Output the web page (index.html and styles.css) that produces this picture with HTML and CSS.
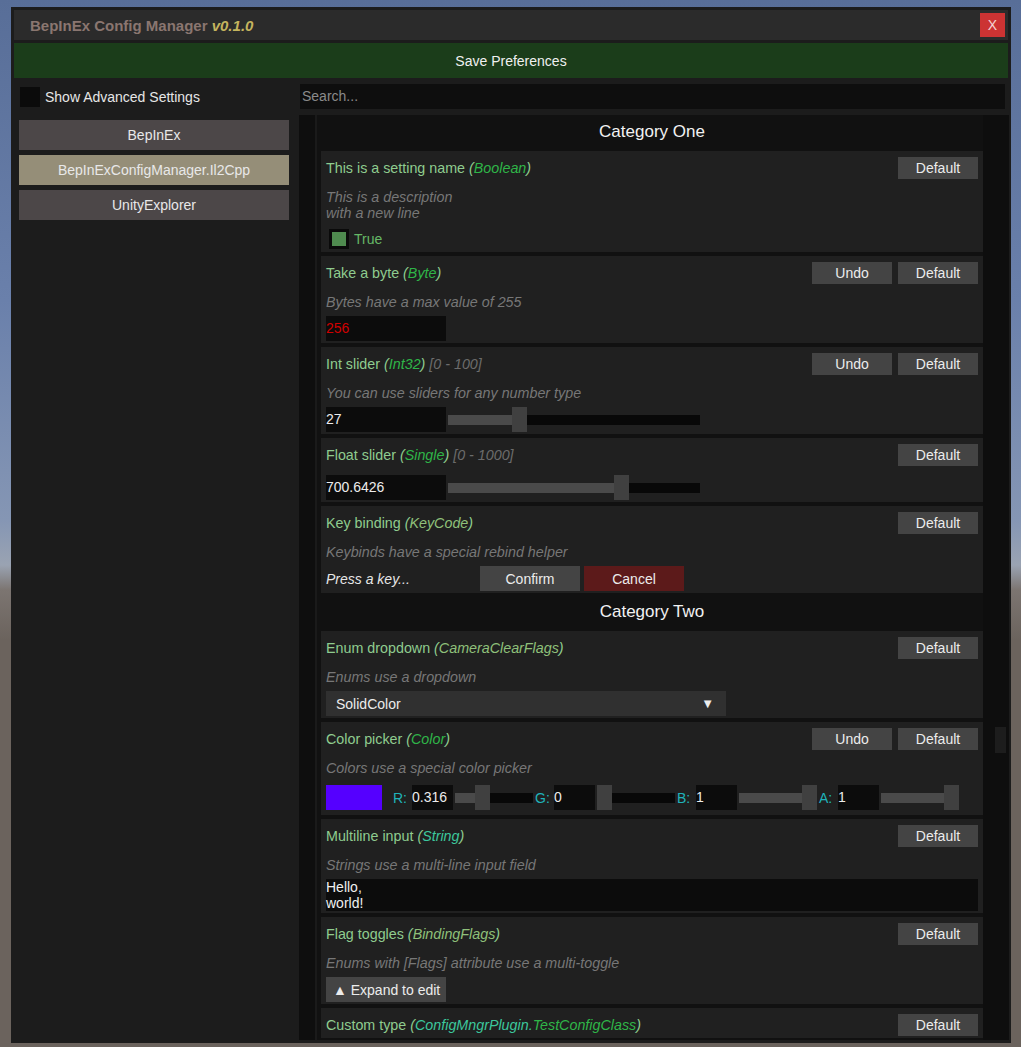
FILE: index.html
```html
<!DOCTYPE html>
<html lang="en">
<head>
    <meta charset="UTF-8">
    <title>BepInEx Config Manager</title>
    <link rel="stylesheet" href="styles.css">
</head>
<body>
    <div class="window">
        <!-- Title bar -->
        <div class="titlebar">
            <div class="title">BepInEx Config Manager <i>v0.1.0</i></div>
            <button class="close-btn">X</button>
        </div>
        <div class="save-bar">Save Preferences</div>

        <div class="main">
            <!-- Plugin list -->
            <div class="sidebar">
                <div class="adv-toggle">
                    <span class="checkbox"></span>
                    <span>Show Advanced Settings</span>
                </div>
                <div class="plugin-list">
                    <div class="plugin-btn">BepInEx</div>
                    <div class="plugin-btn active">BepInExConfigManager.Il2Cpp</div>
                    <div class="plugin-btn">UnityExplorer</div>
                </div>
            </div>

            <!-- Settings -->
            <div class="content">
                <div class="search">Search...</div>
                <div class="scroll">
                    <div class="scroll-gutter"></div>
                    <div class="settings">
                        <div class="category">Category One</div>

                        <div class="setting">
                            <div class="setting-head">
                                <div class="setting-name">This is a setting name <i>(<span class="t-struct">Boolean</span>)</i></div>
                                <button class="btn">Default</button>
                            </div>
                            <div class="setting-desc">This is a description<br>with a new line</div>
                            <div class="setting-ctrl toggle-row">
                                <span class="toggle"><span class="toggle-fill"></span></span>
                                <span class="toggle-label">True</span>
                            </div>
                        </div>

                        <div class="setting">
                            <div class="setting-head">
                                <div class="setting-name">Take a byte <i>(<span class="t-struct">Byte</span>)</i></div>
                                <button class="btn">Undo</button>
                                <button class="btn">Default</button>
                            </div>
                            <div class="setting-desc">Bytes have a max value of 255</div>
                            <div class="setting-ctrl">
                                <div class="field invalid">256</div>
                            </div>
                        </div>

                        <div class="setting">
                            <div class="setting-head">
                                <div class="setting-name">Int slider <i>(<span class="t-struct">Int32</span>)</i> <i class="range">[0 - 100]</i></div>
                                <button class="btn">Undo</button>
                                <button class="btn">Default</button>
                            </div>
                            <div class="setting-desc">You can use sliders for any number type</div>
                            <div class="setting-ctrl">
                                <div class="field">27</div>
                                <div class="slider wide">
                                    <div class="slider-fill" style="width: calc((100% - 15px) * 0.27)"></div>
                                    <div class="slider-handle"></div>
                                </div>
                            </div>
                        </div>

                        <div class="setting no-desc">
                            <div class="setting-head">
                                <div class="setting-name">Float slider <i>(<span class="t-struct">Single</span>)</i> <i class="range">[0 - 1000]</i></div>
                                <button class="btn">Default</button>
                            </div>
                            <div class="setting-ctrl">
                                <div class="field">700.6426</div>
                                <div class="slider wide">
                                    <div class="slider-fill" style="width: calc((100% - 15px) * 0.7006)"></div>
                                    <div class="slider-handle"></div>
                                </div>
                            </div>
                        </div>

                        <div class="setting">
                            <div class="setting-head">
                                <div class="setting-name">Key binding <i>(<span class="t-enum">KeyCode</span>)</i></div>
                                <button class="btn">Default</button>
                            </div>
                            <div class="setting-desc">Keybinds have a special rebind helper</div>
                            <div class="setting-ctrl">
                                <span class="press-key">Press a key...</span>
                                <button class="btn wide-btn">Confirm</button>
                                <button class="btn wide-btn cancel">Cancel</button>
                            </div>
                        </div>

                        <div class="category">Category Two</div>

                        <div class="setting">
                            <div class="setting-head">
                                <div class="setting-name">Enum dropdown <i>(<span class="t-enum">CameraClearFlags</span>)</i></div>
                                <button class="btn">Default</button>
                            </div>
                            <div class="setting-desc">Enums use a dropdown</div>
                            <div class="setting-ctrl">
                                <div class="dropdown"><span>SolidColor</span><span class="arrow">▼</span></div>
                            </div>
                        </div>

                        <div class="setting">
                            <div class="setting-head">
                                <div class="setting-name">Color picker <i>(<span class="t-struct">Color</span>)</i></div>
                                <button class="btn">Undo</button>
                                <button class="btn">Default</button>
                            </div>
                            <div class="setting-desc">Colors use a special color picker</div>
                            <div class="setting-ctrl color-row">
                                <div class="swatch"></div>
                                <div class="channel">
                                    <span class="ch-label">R:</span>
                                    <div class="field ch-field">0.316</div>
                                    <div class="slider small">
                                        <div class="slider-fill" style="width: calc((100% - 15px) * 0.316)"></div>
                                        <div class="slider-handle"></div>
                                    </div>
                                </div>
                                <div class="channel">
                                    <span class="ch-label">G:</span>
                                    <div class="field ch-field">0</div>
                                    <div class="slider small">
                                        <div class="slider-fill" style="width: 0"></div>
                                        <div class="slider-handle"></div>
                                    </div>
                                </div>
                                <div class="channel">
                                    <span class="ch-label">B:</span>
                                    <div class="field ch-field">1</div>
                                    <div class="slider small">
                                        <div class="slider-fill" style="width: calc(100% - 15px)"></div>
                                        <div class="slider-handle"></div>
                                    </div>
                                </div>
                                <div class="channel">
                                    <span class="ch-label">A:</span>
                                    <div class="field ch-field">1</div>
                                    <div class="slider small">
                                        <div class="slider-fill" style="width: calc(100% - 15px)"></div>
                                        <div class="slider-handle"></div>
                                    </div>
                                </div>
                            </div>
                        </div>

                        <div class="setting">
                            <div class="setting-head">
                                <div class="setting-name">Multiline input <i>(<span class="t-class">String</span>)</i></div>
                                <button class="btn">Default</button>
                            </div>
                            <div class="setting-desc">Strings use a multi-line input field</div>
                            <div class="multiline">Hello,<br>world!</div>
                        </div>

                        <div class="setting">
                            <div class="setting-head">
                                <div class="setting-name">Flag toggles <i>(<span class="t-enum">BindingFlags</span>)</i></div>
                                <button class="btn">Default</button>
                            </div>
                            <div class="setting-desc">Enums with [Flags] attribute use a multi-toggle</div>
                            <div class="setting-ctrl">
                                <button class="btn expand-btn">▲ Expand to edit</button>
                            </div>
                        </div>

                        <div class="setting">
                            <div class="setting-head">
                                <div class="setting-name">Custom type <i>(<span class="t-class">ConfigMngrPlugin.</span><span class="t-struct">TestConfigClass</span>)</i></div>
                                <button class="btn">Default</button>
                            </div>
                        </div>
                    </div>
                    <div class="scrollbar"><div class="scroll-thumb"></div></div>
                </div>
            </div>
        </div>
    </div>
</body>
</html>
```

FILE: styles.css
```css
body {
    margin: 0;
    height: 1047px;
    overflow: hidden;
    font-family: "Liberation Sans", Arial, sans-serif;
    font-size: 14px;
    color: #e6e6e6;
    background: linear-gradient(to bottom, #586e98 0, #6a80ab 300px, #8596b4 520px, #9aa3b2 565px, #7c7571 590px, #6b635d 640px, #6b635d 100%);
}

button {
    font-family: inherit;
    font-size: 14px;
    border: none;
    padding: 0;
    cursor: pointer;
}

/* Window frame */
.window {
    margin: 7px 0 0 11px;
    width: 1000px;
    height: 1036px;
    box-sizing: border-box;
    padding: 3px 2px 3px 3px;
    background-color: #1c1c1c;
    display: flex;
    flex-direction: column;
}

.titlebar {
    height: 30px;
    margin-right: 1px;
    background-color: #2b2b2b;
    display: flex;
    align-items: center;
    justify-content: space-between;
    padding: 0 3px 0 16px;
}

.title {
    font-weight: bold;
    font-size: 15px;
    color: #8a7670;
}

.title i {
    color: #c4b45e;
}

.close-btn {
    width: 25px;
    height: 24px;
    background-color: #cc3333;
    color: #f4d4d4;
}

.save-bar {
    margin: 3px 1px 0 0;
    height: 35px;
    background-color: #1b3d1a;
    color: #f0f0f0;
    display: flex;
    align-items: center;
    justify-content: center;
}

.main {
    flex: 1;
    display: flex;
    gap: 2px;
    min-height: 0;
}

/* Sidebar */
.sidebar {
    width: 283px;
    padding-top: 9px;
    box-sizing: border-box;
}

.adv-toggle {
    display: flex;
    align-items: center;
    gap: 5px;
    padding-left: 6px;
    height: 20px;
}

.checkbox {
    width: 20px;
    height: 20px;
    background-color: #0b0b0b;
}

.plugin-list {
    margin-top: 13px;
    padding-left: 5px;
    display: flex;
    flex-direction: column;
    gap: 5px;
}

.plugin-btn {
    width: 270px;
    height: 30px;
    background-color: #4c4748;
    color: #e8e8e8;
    display: flex;
    align-items: center;
    justify-content: center;
}

.plugin-btn.active {
    background-color: #958e78;
}

/* Content */
.content {
    flex: 1;
    display: flex;
    flex-direction: column;
    padding-top: 6px;
    min-height: 0;
}

.search {
    height: 25px;
    line-height: 25px;
    margin: 0 4px 0 1px;
    padding-left: 2px;
    background-color: #0e0e0e;
    color: #8a8a8a;
}

.scroll {
    margin-top: 6px;
    flex: 1;
    display: flex;
    background-color: #111;
    overflow: hidden;
}

.scroll-gutter {
    width: 16px;
    background-color: #0e0e0e;
    border-right: 2px solid #1a1a1a;
}

.settings {
    flex: 1;
    padding: 2px 0 0 4px;
    display: flex;
    flex-direction: column;
    gap: 4px;
}

.scrollbar {
    width: 26px;
    background-color: #0e0e0e;
}

.scroll-thumb {
    margin: 612px 0 0 12px;
    width: 11px;
    height: 26px;
    background-color: #1d1d1d;
}

.category {
    height: 30px;
    flex-shrink: 0;
    display: flex;
    align-items: center;
    justify-content: center;
    font-size: 17px;
    color: #f2f2f2;
}

/* Setting cards */
.setting {
    flex-shrink: 0;
    background-color: #202020;
    padding: 6px 5px 2px;
}

.setting-head {
    display: flex;
    align-items: center;
    gap: 6px;
    height: 22px;
}

.setting-name {
    flex: 1;
    color: #8fcc8f;
    font-size: 14.3px;
}

.t-struct {
    color: #2fb548;
}

.t-enum {
    color: #8fc07a;
}

.t-class {
    color: #3cc79c;
}

.range {
    color: #6c6c6c;
}

.setting-desc {
    margin: 10px 0 6px;
    line-height: 16px;
    font-size: 14.3px;
    font-style: italic;
    color: #777;
}

.no-desc .setting-ctrl {
    margin-top: 9px;
}

.setting-ctrl {
    display: flex;
    align-items: center;
    height: 25px;
}

.btn {
    width: 80px;
    height: 22px;
    background-color: #444;
    color: #ececec;
}

.wide-btn {
    width: 100px;
    height: 25px;
    margin-right: 4px;
}

.btn.cancel {
    background-color: #5c1a1a;
}

.expand-btn {
    width: 120px;
    height: 25px;
    text-align: left;
    padding-left: 7px;
}

/* Toggle */
.toggle-row {
    height: 23px;
    padding-left: 3px;
    gap: 5px;
}

.toggle {
    width: 20px;
    height: 20px;
    background-color: #0a0a0a;
    display: flex;
    align-items: center;
    justify-content: center;
}

.toggle-fill {
    width: 14px;
    height: 14px;
    background-color: #4f8b4f;
}

.toggle-label {
    color: #66b866;
}

/* Inputs */
.field {
    width: 120px;
    height: 25px;
    line-height: 25px;
    background-color: #0c0c0c;
    color: #ececec;
    white-space: nowrap;
    overflow: hidden;
}

.field.invalid {
    color: #d00000;
}

.slider {
    display: flex;
    align-items: center;
    height: 10px;
    margin-left: 2px;
    background-color: #080808;
}

.slider.wide {
    width: 252px;
}

.slider.small {
    width: 78px;
}

.slider-fill {
    height: 10px;
    flex-shrink: 0;
    background-color: #4a4a4a;
}

.slider-handle {
    flex-shrink: 0;
    width: 15px;
    height: 25px;
    background-color: #404040;
}

.press-key {
    width: 154px;
    font-style: italic;
    color: #e6e6e6;
}

.dropdown {
    width: 400px;
    height: 25px;
    box-sizing: border-box;
    padding: 0 12px 0 10px;
    background-color: #303030;
    color: #ececec;
    display: flex;
    align-items: center;
    justify-content: space-between;
}

.arrow {
    font-size: 13px;
}

/* Color picker */
.color-row {
    height: 31px;
}

.swatch {
    width: 56px;
    height: 25px;
    background-color: #5500ff;
    margin-right: 11px;
}

.channel {
    display: flex;
    align-items: center;
    width: 142px;
}

.ch-label {
    width: 19px;
    color: #1fb3bb;
}

.ch-field {
    width: 41px;
}

.multiline {
    height: 32px;
    line-height: 16px;
    background-color: #0c0c0c;
    color: #f0f0f0;
}
```
